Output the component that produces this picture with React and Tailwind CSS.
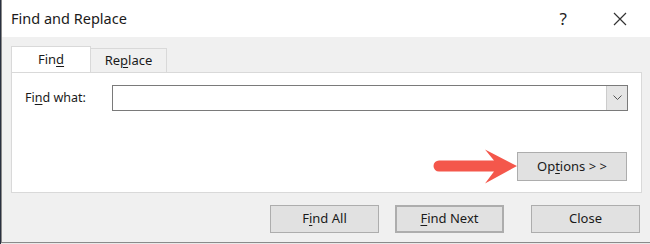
import React from "react";

const font = { fontFamily: '"Segoe UI", "Noto Sans", "Liberation Sans", sans-serif' };

function Key({ children }) {
  return <span className="underline underline-offset-2 decoration-1">{children}</span>;
}

function Btn({ children, className = "" }) {
  return (
    <button
      className={`h-[28px] bg-[#e1e1e1] border border-[#adadad] text-[13px] text-[#1a1a1a] flex items-center justify-center ${className}`}
    >
      {children}
    </button>
  );
}

export default function App() {
  return (
    <div className="w-[650px] h-[244px] flex bg-[#e9e9e9] overflow-hidden" style={font}>
      {/* sliver of the window behind */}
      <div className="w-[1px] h-full bg-[#2a3140]"></div>

      <div className="w-[649px] h-[243px] border-l border-b border-[#8a8a8a] flex flex-col bg-[#f0f0f0]">
        {/* Title bar */}
        <div className="h-[37px] bg-white flex items-center pl-[9px] pr-[20px]">
          <span className="text-[14.5px] text-[#1a1a1a]">Find and Replace</span>
          <span className="ml-auto text-[17px] text-[#222] mr-[46px]">?</span>
          <svg width="14" height="14" viewBox="0 0 14 14" className="mr-[3px]">
            <path d="M1 1 L13 13 M13 1 L1 13" stroke="#333" strokeWidth="1.2" />
          </svg>
        </div>

        {/* Tabs */}
        <div className="flex items-end pl-[9px] pt-[9px] h-[35px]">
          <div className="w-[80px] h-[27px] bg-white border border-b-0 border-[#d9d9d9] flex items-center justify-center text-[13px] text-[#1a1a1a] relative top-[1px]">
            Fin<Key>d</Key>
          </div>
          <div className="w-[76px] h-[24px] bg-[#f0f0f0] border border-l-0 border-b-0 border-[#d9d9d9] flex items-center justify-center text-[13px] text-[#1a1a1a]">
            Re<Key>p</Key>lace
          </div>
        </div>

        {/* Tab panel */}
        <div className="relative ml-[9px] w-[631px] h-[121px] bg-white border border-[#d9d9d9] flex flex-col">
          <div className="flex items-center mt-[12px]">
            <span className="w-[100px] pl-[13px] text-[12.5px] text-[#1a1a1a]">
              Fi<Key>n</Key>d what:
            </span>
            <div className="w-[516px] h-[26px] border border-[#7a7a7a] bg-white flex justify-end">
              <div className="w-[21px] h-full bg-[#e5e5e5] border-l border-[#cccccc] flex items-center justify-center">
                <svg width="9" height="6" viewBox="0 0 9 6">
                  <path d="M0.5 0.5 L4.5 4.5 L8.5 0.5" stroke="#555" strokeWidth="1" fill="none" />
                </svg>
              </div>
            </div>
          </div>

          <div className="flex justify-end mt-[41px] pr-[14px]">
            <Btn className="w-[110px] h-[29px]">
              Op<Key>t</Key>ions &gt; &gt;
            </Btn>
          </div>

          {/* red pointer arrow */}
          <svg className="absolute left-[421px] top-[75px]" width="86" height="38" viewBox="0 0 86 38">
            <path d="M6 12.5 L61 12.5 L52 1.5 L84 18 L52 35.5 L61 23.5 L6 23.5 A5.5 5.5 0 0 1 6 12.5 Z" fill="#f4574b" />
          </svg>
        </div>

        {/* Bottom buttons */}
        <div className="flex mt-[12px] pl-[268px]">
          <Btn className="w-[109px]">
            F<Key>i</Key>nd All
          </Btn>
          <Btn className="w-[109px] ml-[16px] border-2 border-[#0078d7]">
            <Key>F</Key>ind Next
          </Btn>
          <Btn className="w-[109px] ml-[27px]">Close</Btn>
        </div>
      </div>
    </div>
  );
}
